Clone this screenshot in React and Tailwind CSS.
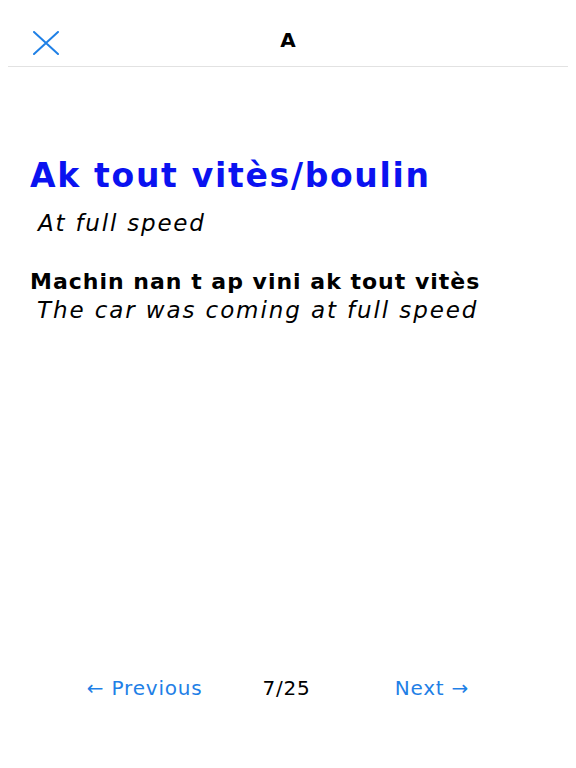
export default function App() {
  return (
    <div className="flex h-[768px] w-[576px] flex-col bg-white font-['DejaVu_Sans',sans-serif] text-black">
      <header className="relative mx-2 flex h-[67px] items-center justify-center border-b border-[#e2e2e2]">
        <button className="absolute left-[25px] top-[31px] text-[#1f80e6]">
          <svg width="26" height="24" viewBox="0 0 26 24" fill="none" stroke="currentColor" strokeWidth="2" strokeLinecap="round">
            <path d="M1 1 L25 23 M25 1 L1 23" />
          </svg>
        </button>
        <span className="pt-[14px] text-[20px] font-bold">A</span>
      </header>

      <main className="flex-1 px-[30px] pt-[86px]">
        <h1 className="text-[33px] font-bold leading-[46px] tracking-[1.7px] text-[#0a12f0]">Ak tout vitès/boulin</h1>
        <p className="mt-[9px] pl-[8px] text-[23px] italic leading-[30px] tracking-[1.8px]">At full speed</p>
        <p className="mt-[30px] text-[22px] font-bold leading-[28px] tracking-[1px]">Machin nan t ap vini ak tout vitès</p>
        <p className="pl-[7px] text-[23px] italic leading-[28px] tracking-[1.9px]">The car was coming at full speed</p>
      </main>

      <footer className="flex h-[95px] items-start justify-center pr-[20px] text-[20px] tracking-[0.8px]">
        <button className="text-[#1f80e6]">← Previous</button>
        <span className="ml-[60px]">7/25</span>
        <button className="ml-[84px] text-[#1f80e6]">Next →</button>
      </footer>
    </div>
  );
}
